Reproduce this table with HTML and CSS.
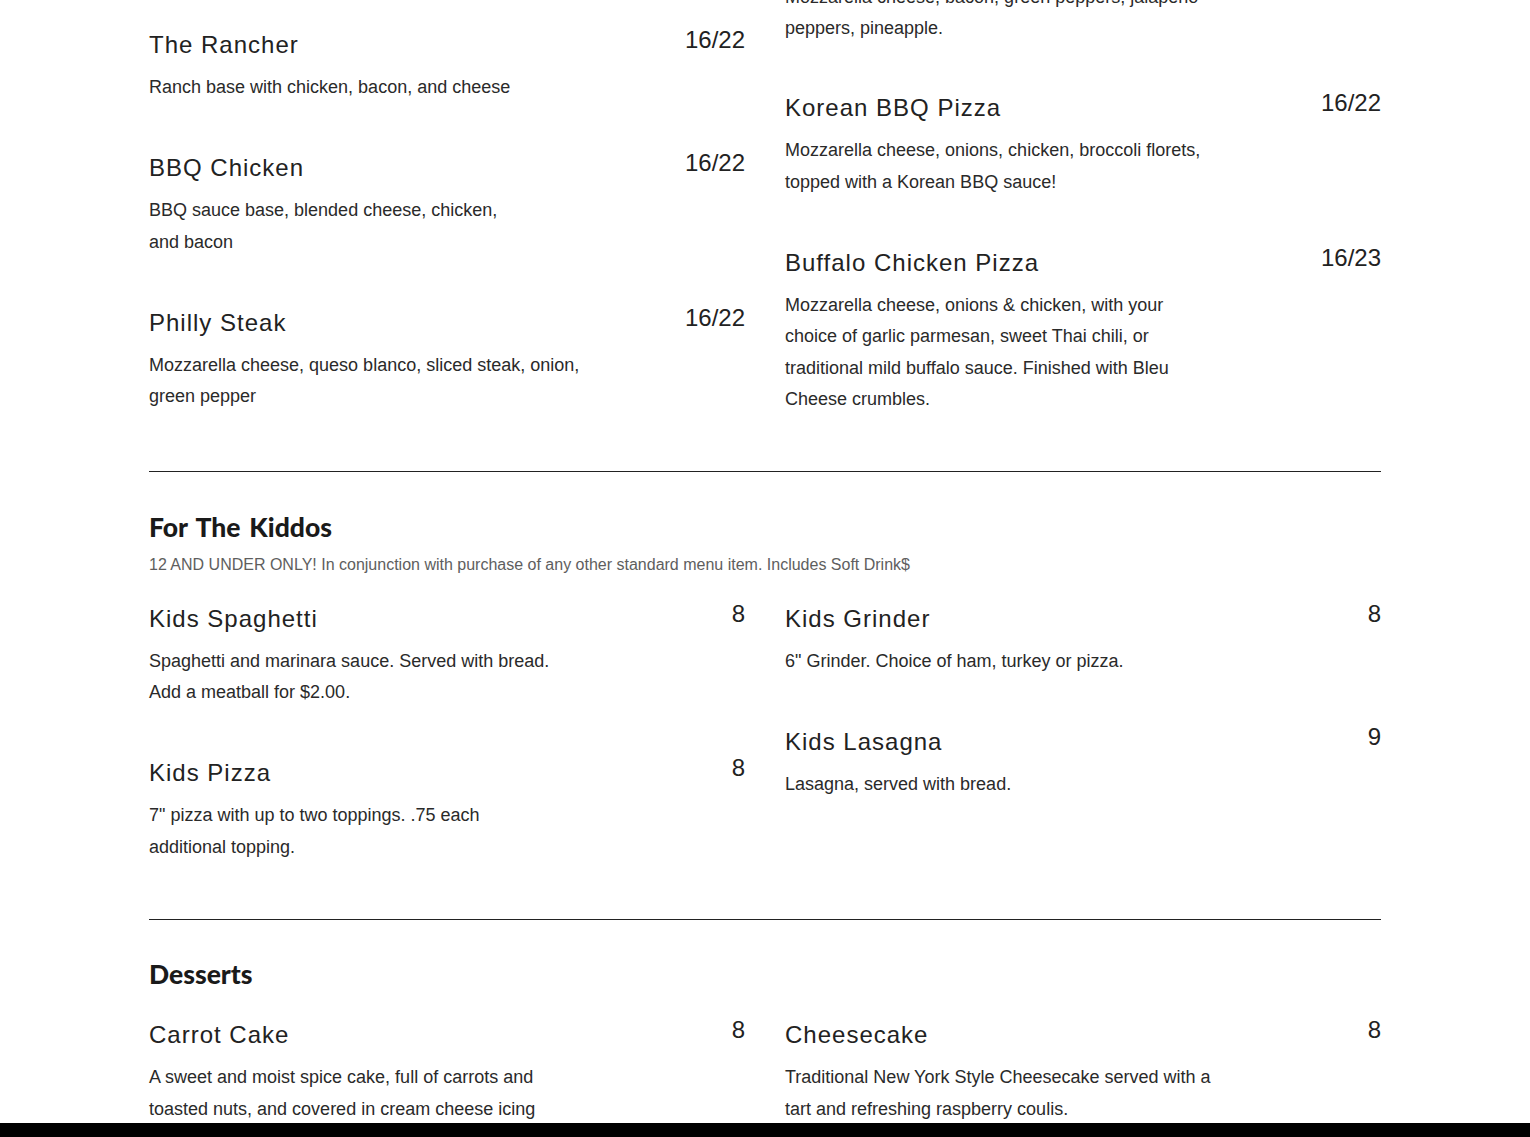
FILE: index.html
```html
<!DOCTYPE html>
<html lang="en">
<head>
<meta charset="utf-8">
<title>Menu</title>
<link rel="stylesheet" href="styles.css">
</head>
<body>
<main class="menu">
  <section class="section section--continued">
    <div class="cols">
      <div class="col col--offset">
        <article class="item">
          <div class="item-head"><h3 class="item-name">The Rancher</h3><span class="item-price">16/22</span></div>
          <p class="item-desc">Ranch base with chicken, bacon, and cheese</p>
        </article>
        <article class="item">
          <div class="item-head"><h3 class="item-name">BBQ Chicken</h3><span class="item-price">16/22</span></div>
          <p class="item-desc">BBQ sauce base, blended cheese, chicken,<br>and bacon</p>
        </article>
        <article class="item">
          <div class="item-head"><h3 class="item-name">Philly Steak</h3><span class="item-price">16/22</span></div>
          <p class="item-desc">Mozzarella cheese, queso blanco, sliced steak, onion,<br>green pepper</p>
        </article>
      </div>
      <div class="col">
        <article class="item item--cut">
          <p class="item-desc">Mozzarella cheese, bacon, green peppers, jalapeño<br>peppers, pineapple.</p>
        </article>
        <article class="item">
          <div class="item-head"><h3 class="item-name">Korean BBQ Pizza</h3><span class="item-price">16/22</span></div>
          <p class="item-desc">Mozzarella cheese, onions, chicken, broccoli florets,<br>topped with a Korean BBQ sauce!</p>
        </article>
        <article class="item">
          <div class="item-head"><h3 class="item-name">Buffalo Chicken Pizza</h3><span class="item-price">16/23</span></div>
          <p class="item-desc">Mozzarella cheese, onions &amp; chicken, with your<br>choice of garlic parmesan, sweet Thai chili, or<br>traditional mild buffalo sauce. Finished with Bleu<br>Cheese crumbles.</p>
        </article>
      </div>
    </div>
  </section>

  <section class="section">
    <header class="section-head">
      <h2 class="section-title">For The Kiddos</h2>
      <p class="section-note">12 AND UNDER ONLY! In conjunction with purchase of any other standard menu item. Includes Soft Drink$</p>
    </header>
    <div class="cols">
      <div class="col">
        <article class="item">
          <div class="item-head"><h3 class="item-name">Kids Spaghetti</h3><span class="item-price">8</span></div>
          <p class="item-desc">Spaghetti and marinara sauce. Served with bread.<br>Add a meatball for $2.00.</p>
        </article>
        <article class="item">
          <div class="item-head"><h3 class="item-name">Kids Pizza</h3><span class="item-price">8</span></div>
          <p class="item-desc">7" pizza with up to two toppings. .75 each<br>additional topping.</p>
        </article>
      </div>
      <div class="col">
        <article class="item">
          <div class="item-head"><h3 class="item-name">Kids Grinder</h3><span class="item-price">8</span></div>
          <p class="item-desc">6" Grinder. Choice of ham, turkey or pizza.</p>
        </article>
        <article class="item">
          <div class="item-head"><h3 class="item-name">Kids Lasagna</h3><span class="item-price">9</span></div>
          <p class="item-desc">Lasagna, served with bread.</p>
        </article>
      </div>
    </div>
  </section>

  <section class="section">
    <header class="section-head section-head--plain">
      <h2 class="section-title">Desserts</h2>
    </header>
    <div class="cols">
      <div class="col">
        <article class="item">
          <div class="item-head"><h3 class="item-name">Carrot Cake</h3><span class="item-price">8</span></div>
          <p class="item-desc">A sweet and moist spice cake, full of carrots and<br>toasted nuts, and covered in cream cheese icing</p>
        </article>
      </div>
      <div class="col">
        <article class="item">
          <div class="item-head"><h3 class="item-name">Cheesecake</h3><span class="item-price">8</span></div>
          <p class="item-desc">Traditional New York Style Cheesecake served with a<br>tart and refreshing raspberry coulis.</p>
        </article>
      </div>
    </div>
  </section>
</main>
<div class="bottom-bar"></div>
</body>
</html>
```

FILE: styles.css
```css
html, body {
  margin: 0;
  padding: 0;
  background: #ffffff;
}

body {
  font-family: "Liberation Sans", Arial, sans-serif;
  color: #222222;
  overflow: hidden;
}

.menu {
  width: 1232px;
  margin: 0 auto;
}

.section {
  padding-bottom: 6px;
  border-bottom: 1px solid #222222;
}

.section:last-child {
  border-bottom: none;
}

.section + .section {
  padding-top: 38.5px;
}

.section--continued {
  margin-top: -18.5px;
}

.section-head {
  display: flex;
  flex-direction: column;
  gap: 10px;
  margin-bottom: 27px;
}

.section-head--plain {
  margin-bottom: 30px;
}

.section-title {
  margin: 0;
  font-family: "Lato", sans-serif;
  font-weight: 900;
  font-size: 26.5px;
  line-height: 32px;
  letter-spacing: 0;
  word-spacing: 2.5px;
  color: #1a1a1a;
}

.section-note {
  margin: 0;
  font-size: 16px;
  line-height: 24px;
  color: #5e5e5e;
}

.cols {
  display: grid;
  grid-template-columns: 1fr 1fr;
  column-gap: 40px;
  align-items: start;
}

.col--offset {
  padding-top: 48.5px;
}

.item {
  margin-bottom: 49.5px;
}

.item--cut {
  margin-bottom: 48.5px;
}

.item-head {
  display: flex;
  justify-content: space-between;
  align-items: flex-start;
}

.item-name {
  margin: 0;
  font-weight: 400;
  font-size: 24px;
  line-height: 30px;
  letter-spacing: 1px;
  color: #222222;
}

.item-price {
  margin-top: -5px;
  font-size: 24px;
  line-height: 30px;
  color: #222222;
}

.item-desc {
  margin: 12px 0 0;
  font-size: 18px;
  line-height: 31.5px;
  color: #2a2a2a;
}

.item--cut .item-desc {
  margin-top: 0;
}

.bottom-bar {
  position: fixed;
  left: 0;
  right: 0;
  bottom: 0;
  height: 14px;
  background: #000000;
}
```
